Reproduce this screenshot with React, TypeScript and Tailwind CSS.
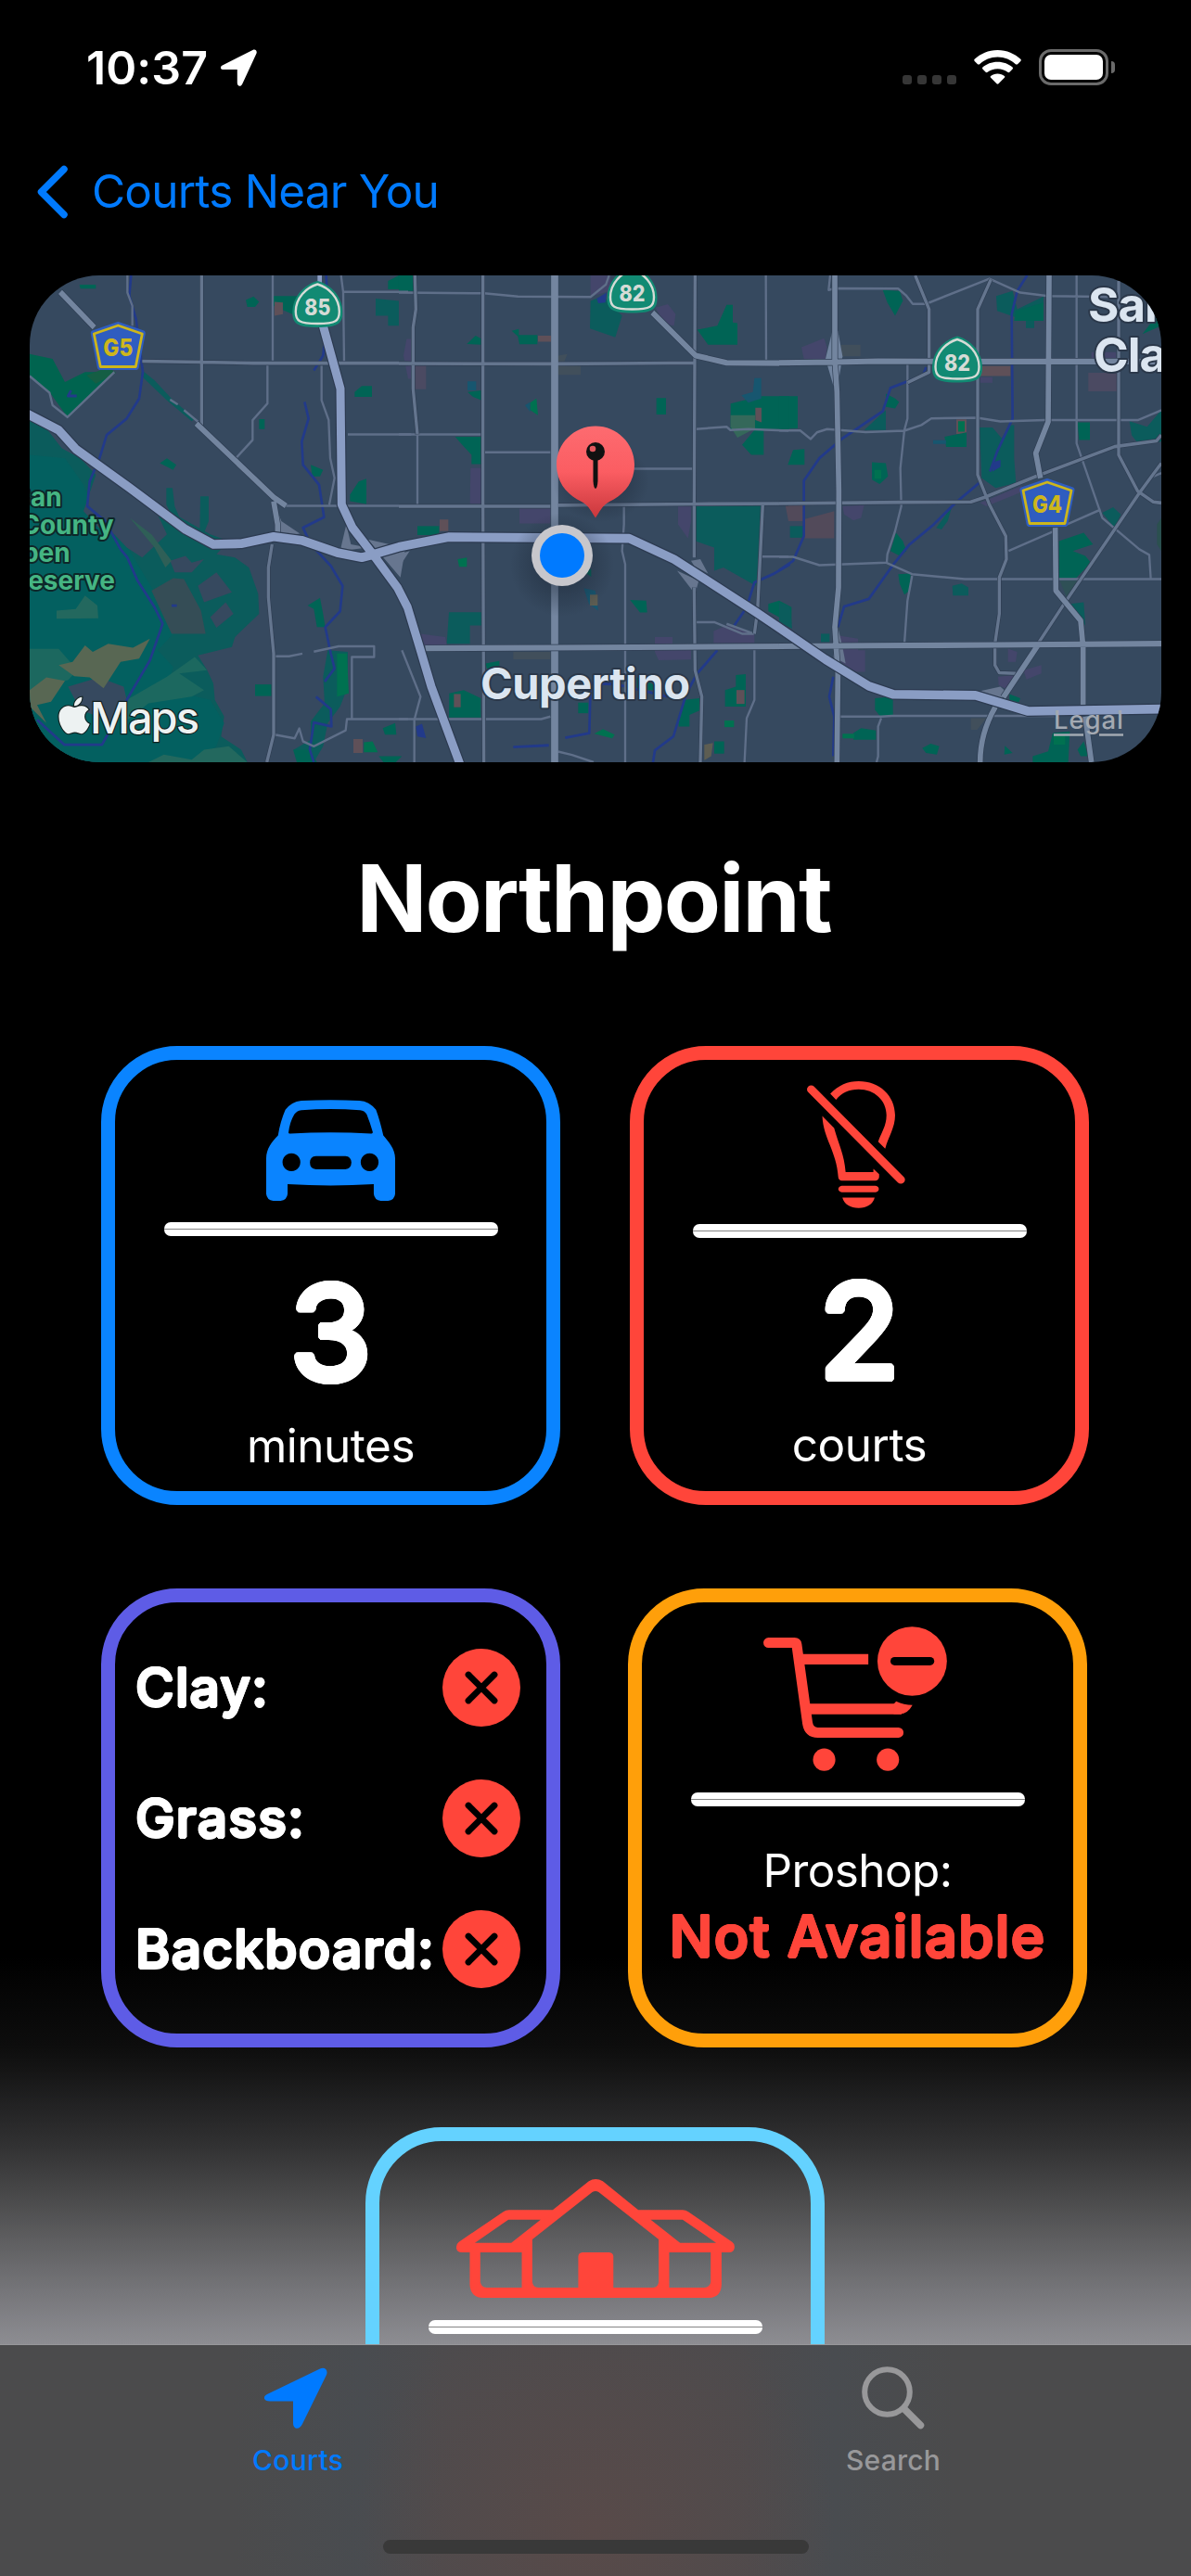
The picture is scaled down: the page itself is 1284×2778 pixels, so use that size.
import { FaApple } from "react-icons/fa";

const DILATE_LG =
  "[text-shadow:3px_0_#fff,-3px_0_#fff,0_3px_#fff,0_-3px_#fff,2.1px_2.1px_#fff,-2.1px_2.1px_#fff,2.1px_-2.1px_#fff,-2.1px_-2.1px_#fff,2.8px_1.1px_#fff,2.8px_-1.1px_#fff,-2.8px_1.1px_#fff,-2.8px_-1.1px_#fff,1.1px_2.8px_#fff,-1.1px_2.8px_#fff,1.1px_-2.8px_#fff,-1.1px_-2.8px_#fff]";
const DILATE_WHITE =
  "[text-shadow:1.5px_0_#fff,-1.5px_0_#fff,0_1.5px_#fff,0_-1.5px_#fff,1px_1px_#fff,-1px_1px_#fff,1px_-1px_#fff,-1px_-1px_#fff]";
const DILATE_RED =
  "[text-shadow:1.5px_0_#ff453a,-1.5px_0_#ff453a,0_1.5px_#ff453a,0_-1.5px_#ff453a,1px_1px_#ff453a,-1px_1px_#ff453a,1px_-1px_#ff453a,-1px_-1px_#ff453a]";

type Tile = { x: number; shapes: [string, string][]; rivers: string; minor: string; mid: string; major: string };

const TEAL = "#0b5c5c";
const DEEP = "#036060";
const PARK = "#006455";
const LAWN = "#007150";
const PURPLE = "#44466b";
const CLAY = "#5f5058";
const BLUE = "#17566f";
const SAND = "#586753";

const tiles: Tile[] = [
  {
    x: 0,
    shapes: [
      [TEAL, "M36 480L100 500L170 545L240 620L340 680L450 740L620 830L680 850L640 890L700 900L745 930L775 1010L778 1070L700 1140L690 1170L580 1195L610 1240L630 1280L635 1330L665 1380L655 1440L720 1480L740 1518H36Z"],
      [DEEP, "M36 590L150 600L210 680L240 750L310 820L360 880L430 990L480 1090L500 1130L450 1180L500 1230L480 1300L620 1330L665 1400L640 1470L560 1518H36Z"],
      [TEAL, "M400 335L440 365L500 425L570 480L560 488L480 425L395 350Z"],
      ["#36495f", "M90 510L150 530L230 610L340 690L450 770L480 830L400 900L350 870L310 830L260 810L210 760L250 650L200 600L140 570Z"],
      ["#36495f", "M490 910L540 895L560 915L600 905L560 945L505 945Z"],
      ["#36495f", "M580 985L640 945L690 1005L600 1035Z"],
      ["#36495f", "M620 1080L670 1035L695 1070L640 1112Z"],
      ["#36495f", "M160 1290L260 1262L340 1290L350 1330L310 1400L200 1360Z"],
      ["#354d56", "M430 1000L500 962L535 965L590 1060L605 1130L495 1130Z"],
      ["#00644f", "M36 285L110 300L150 370L215 340L310 340L160 478L100 400L36 350Z"],
      ["#155e44", "M220 350L290 325L315 342L250 375Z"],
      ["#2f5f57", "M360 780L430 830L495 910L475 930L440 870Z"],
      ["#23685e", "M123 1060L185 1055L215 1015L255 1045L258 1083L123 1085Z"],
      ["#1c685f", "M36 1176L130 1176L190 1240L160 1270L36 1300Z"],
      ["#1c685f", "M350 1330L480 1260L570 1200L610 1240L520 1250L600 1300L560 1320L420 1340L340 1400Z"],
      [SAND, "M130 1225L175 1215L215 1165L240 1185L290 1160L370 1172L425 1145L390 1205L330 1215L275 1295L230 1262L180 1258Z"],
      [SAND, "M36 1300L90 1262L150 1272L105 1335L60 1345L90 1400L36 1350Z"],
      ["#23685e", "M420 1518L470 1495L560 1510L600 1480L680 1470L740 1518Z"],
      [TEAL, "M478 690H498L505 745L530 800H510L478 740Z"],
      [TEAL, "M588 715H615V790L600 825H586Z"],
      [PARK, "M825 110H945V165H885L825 140Z"],
      [CLAY, "M828 128L855 130V165L828 170Z"],
      [PARK, "M735 122L760 112L778 128L765 143H740Z"],
      [TEAL, "M1155 118L1230 125V200H1195V170H1155Z"],
      [PARK, "M1195 65L1230 48H1260V90H1195Z"],
      [PARK, "M1087 400L1110 382H1143V415H1087Z"],
      [PARK, "M778 482H796V512H778Z"],
      [PARK, "M1072 710L1100 670L1125 662V738L1072 730Z"],
      [PARK, "M457 615L480 600L510 620L500 635Z"],
      [PARK, "M945 620L985 635L975 655H950Z"],
      [PARK, "M935 1045L975 1022L985 1070L992 1110H965L955 1055Z"],
      [TEAL, "M1000 1180L1065 1185V1290L1040 1350L1000 1400L985 1470L955 1518H915L890 1480L945 1450L945 1395L990 1340L985 1260Z"],
      [LAWN, "M1030 1190H1062L1068 1310L1030 1320Z"],
      [PARK, "M765 1283H818V1318H765Z"],
      [PARK, "M888 1480H940L965 1518H900Z"],
      [CLAY, "M1083 1448H1113V1490H1083Z"],
      [LAWN, "M1117 1458L1145 1455L1162 1488H1117Z"],
      [PARK, "M1178 1415L1218 1400L1222 1435H1185Z"],
      [PARK, "M1165 1500H1240L1220 1518H1180Z"],
      [PARK, "M197 76H250V88H200Z"],
      ["#67768f", "M830 740L850 790L910 828L830 838Z"],
      ["#67768f", "M1060 800L1075 860L1130 870L1040 880Z"],
      ["#67768f", "M1130 845L1200 860L1255 850L1235 960L1180 900Z"],
    ],
    rivers:
      "M364 48L358 110L380 180L402 340L390 420L350 480L285 530L262 600L230 670L222 745L280 790L330 875L352 900L385 970L440 1050L466 1100L425 1210L350 1330L270 1465H148L60 1390M995 48L1000 150L985 290L955 335M925 430L938 480L916 550L920 620L972 680L988 778L920 810L945 860L1010 925L1048 985L1040 1062L992 1110L1010 1190L1022 1235L990 1275M962 1320L1010 1358L1012 1410L955 1398L942 1480L955 1518M170 395L160 412H188M495 1045H512",
    minor:
      "M352 48V100L368 140V200M36 352L100 402L110 440L158 476L310 340M805 315V435L757 485V545L705 598M980 320V425L1003 485L1008 600L1022 660L1005 740M865 744H1250M1043 48L1050 98H1260M1050 98L1053 310M1065 528H1270M828 1198H875L918 1190M955 1184L1035 1168H1150V1200H1078V1388H1260M828 1435L893 1446L908 1416L920 1455L955 1470L1058 1422L1062 1388H1090M822 48V305M535 455L580 490M490 423L515 438",
    mid: "M592 48V500M400 307L590 310L760 313H1260M820 860L808 930V1020L825 1190V1435L803 1518",
    major: "M135 98L245 205M575 495L760 660L825 718L865 744M825 730L838 800V830",
  },
  {
    x: 1230,
    shapes: [
      [PARK, "M0 48H48V95H0Z"],
      [PURPLE, "M620 48H685V95L620 112Z"],
      [TEAL, "M620 125L660 110L722 170L700 235L618 208Z"],
      ["#223a8a", "M640 118L672 100L668 130L645 132Z"],
      [PURPLE, "M830 145L870 135L895 165L890 200L860 195Z"],
      [PARK, "M965 212L1030 200L1060 137H1080V190L1095 192V257H1000Z"],
      [PARK, "M220 255L248 230L268 240V257Z"],
      [PARK, "M365 215L388 210V228H448V256H390L385 232Z"],
      [CLAY, "M450 230H492V248H450Z"],
      ["#414f5b", "M515 290L545 285L530 320H588V348H515Z"],
      [PURPLE, "M15 290L25 240H40V360H30Z"],
      ["#4b4a62", "M50 320H88V392H50Z"],
      [BLUE, "M222 368H250V395H222Z"],
      [PARK, "M222 400L268 395V425L240 415Z"],
      [BLUE, "M408 440L425 430V460Z"],
      [LAWN, "M425 432L445 420L450 470L425 455Z"],
      [PARK, "M833 418H864V468H833Z"],
      [PARK, "M1073 435L1170 413H1290V510L1220 512H1180V590H1140L1110 560L1150 515H1073Z"],
      ["#35685a", "M1073 470H1152V510L1095 538L1073 505Z"],
      [BLUE, "M1108 410L1145 400L1150 358H1172V420L1130 432Z"],
      [CLAY, "M1153 448H1173V492L1153 485Z"],
      [PARK, "M182 535H268V618H235V590L205 560Z"],
      [PURPLE, "M232 630H268V738H230Z"],
      [PURPLE, "M390 750H490V797H390Z"],
      [PARK, "M60 805H130V832H60Z"],
      [CLAY, "M132 785H160V820H132Z"],
      [PURPLE, "M903 745H945V790L935 842L903 800Z"],
      [TEAL, "M960 742H1172L1165 900L1155 985L1050 930L1020 940L1020 870L960 850Z"],
      [LAWN, "M190 905L220 900V928H195Z"],
      [PARK, "M595 940L622 935V958Z"],
      [BLUE, "M598 992L635 1000L645 1060L615 1040Z"],
      ["#5d5d52", "M618 1012H643V1045H618Z"],
      [PARK, "M748 1028L800 1030L803 1066H780Z"],
      [TEAL, "M162 1065H268V1105H230V1160H155Z"],
      [PURPLE, "M70 1130L150 1140L155 1165H75Z"],
      [PURPLE, "M828 1140H885V1165L945 1178V1208L840 1210L828 1185Z"],
      [PURPLE, "M1018 1122L1060 1105L1150 1130V1158H1018Z"],
      [PARK, "M1195 1040L1230 1030L1270 1050V1100L1195 1062Z"],
      ["#414f5b", "M370 1185H490V1207H370Z"],
      [PARK, "M280 1220L325 1212V1235H285Z"],
      [PARK, "M163 1310L210 1300L265 1325V1383H162Z"],
      [CLAY, "M178 1312H200V1352H178Z"],
      ["#223a8a", "M55 1410L75 1402L88 1445L60 1440Z"],
      [PARK, "M580 1338H613V1370H580Z"],
      [LAWN, "M632 1432L660 1418L698 1435L690 1446Z"],
      [PARK, "M770 1262L800 1270L850 1300H770Z"],
      [PARK, "M905 1390L925 1330L972 1325V1362L940 1375V1410H905Z"],
      [PARK, "M1055 1350V1300L1090 1290V1255L1122 1252V1350Z"],
      [CLAY, "M1092 1300H1118V1342H1092Z"],
      [LAWN, "M1053 1392H1084V1412H1053Z"],
      ["#5d5d52", "M988 1465L1016 1460L1010 1500L988 1512Z"],
      [PARK, "M1020 1455H1052V1492H1020Z"],
      ["#67768f", "M945 910L975 905L1000 948L955 925Z"],
      ["#67768f", "M900 940L970 970L958 1010Z"],
      ["#67768f", "M0 890L35 880L0 930Z"],
    ],
    rivers:
      "M1265 920L1210 950L1150 975L1125 1050L1085 1105M1030 1180L965 1250L930 1310L888 1440L828 1482L822 1518M370 1472L485 1467M538 1444L616 1430L620 1280L700 1282L870 1320",
    minor:
      "M0 100L275 102L385 112L620 113L670 75L680 48M0 528H270M60 528V740M278 582H490M760 632H952M960 512L1060 505L1072 515L1130 512L1260 517M728 742V800L722 880L732 920V1518M960 1095H1020L1110 1130H1148M1060 1100L1148 1130M1170 897H1260M10 1180L70 1320L50 1390V1518M0 1388H460L490 1380M515 1486L560 1496L630 1518M1150 1180V1330L1125 1385L1118 1518M1187 48L1188 305",
    mid: "M52 48L55 150L46 205V390L60 528M272 48V740L275 1518M0 745H490M515 742L960 738L1260 737M958 48L955 740V900M955 990L958 1240L980 1320L975 1518M1177 740L1160 1060L1150 1130M0 314L500 315L700 314L960 312",
    major: "M820 160L960 290L1060 312L1265 313M85 1174L500 1172L900 1170L1265 1168",
  },
  {
    x: 2460,
    shapes: [
      [PARK, "M335 92L390 95L400 125L375 170L350 130Z"],
      [PURPLE, "M72 265L145 238L155 265L150 300H80Z"],
      ["#414f5b", "M200 257H263V292H200Z"],
      [TEAL, "M702 110L755 95L770 150L855 112V185H825V207H798V185L705 155Z"],
      [PARK, "M765 155L855 130V185H760Z"],
      [CLAY, "M650 322H748V352H650Z"],
      [PURPLE, "M650 355H690V372H650Z"],
      ["#4b4a62", "M1000 342H1092V398H1000Z"],
      [PURPLE, "M1010 280H1090V298H1010Z"],
      [PARK, "M1175 225L1236 150V200Z"],
      [PARK, "M0 413H33V512H0Z"],
      [PARK, "M345 405L375 420L388 430L375 450L345 445Z"],
      [TEAL, "M345 455V515H275L310 485Z"],
      [CLAY, "M573 483H606V527H573Z"],
      [PARK, "M535 535L606 522V566H540Z"],
      [LAWN, "M579 488H600V520H579Z"],
      [BLUE, "M498 546H540V557H498Z"],
      [TEAL, "M648 507H690L720 540L745 500H760V600L766 675L700 690L655 660Z"],
      ["#223a8a", "M690 612L716 605V626L690 640Z"],
      [PARK, "M965 492H1005V545H970Z"],
      [TEAL, "M1133 488L1190 505L1236 455V550L1160 555L1140 530Z"],
      [PARK, "M28 620L45 575L82 572V620Z"],
      [PARK, "M300 612L345 615L352 655L325 678L300 665Z"],
      [LAWN, "M308 635H330V662H308Z"],
      [PURPLE, "M650 735L785 683V702L670 745Z"],
      ["#524a5a", "M20 742H78V785L178 760V842H82V790H30Z"],
      [TEAL, "M35 805H78V840H35Z"],
      [PURPLE, "M205 745L275 742L265 780L240 788L210 770Z"],
      [TEAL, "M508 810L540 770L558 748L545 790L525 815Z"],
      [PARK, "M378 825L400 850L412 880L390 895L360 880Z"],
      [PARK, "M905 850L985 825L1015 860L950 880L990 895L1008 915L960 962H905Z"],
      ["#2f5056", "M908 970H970L930 1022Z"],
      [TEAL, "M940 1040L985 1035L990 1105L950 1055Z"],
      [TEAL, "M1045 765L1080 748L1105 770L1085 810Z"],
      [PARK, "M385 950L425 948L422 1000L405 1012L390 980Z"],
      [TEAL, "M560 985L590 978L612 990V1015H562Z"],
      [TEAL, "M0 1035L35 1048L42 1115L0 1095Z"],
      [PURPLE, "M190 1135L255 1145V1180H278V1245H240L200 1215Z"],
      [TEAL, "M135 1130H163V1155H135Z"],
      [PURPLE, "M740 1175L770 1185L765 1215H740Z"],
      [PURPLE, "M790 1240L848 1225V1250L800 1268Z"],
      [PURPLE, "M708 1260L760 1255L740 1300L710 1285Z"],
      [PARK, "M310 1325L368 1320V1375L330 1383L310 1360Z"],
      [PARK, "M240 1430L265 1415L313 1422V1450H240Z"],
      [LAWN, "M205 1432H243V1446H205Z"],
      [PARK, "M463 1475L490 1462L518 1470L510 1495L475 1490Z"],
      [PARK, "M730 1468L755 1490L728 1495Z"],
      [PARK, "M745 1312L780 1325L775 1337L745 1330Z"],
      [PARK, "M820 1500L870 1485L885 1430L940 1425L935 1518H820Z"],
      [LAWN, "M888 1435H925V1465H888Z"],
      [PARK, "M965 1480L985 1455L1000 1500H975Z"],
      ["#414f5b", "M620 1385H670L640 1420H620Z"],
      ["#2b504f", "M1222 800L1236 780V880L1222 860Z"],
      ["#67768f", "M650 1303L715 1290L740 1310L720 1325Z"],
      ["#67768f", "M190 1110L205 1170L215 1220L175 1200Z"],
      ["#71849f", "M172 215H190L205 292L190 380H175L150 300Z"],
    ],
    rivers:
      "M802 48L770 95L752 165L755 480L705 580L682 640M475 325L465 350L360 388L335 458L205 540L130 600L80 668L80 835L45 910L0 938M650 672L570 735L500 800L420 862L370 920L290 1025L210 1048L190 1110M175 1260L162 1320L178 1380L175 1500",
    minor:
      "M165 48L160 92L180 87L385 88L410 108L432 134H475L680 58L780 100L870 110L1100 113M415 316V480L405 515L392 630L395 745L375 820L350 890L348 915M0 516H68L102 542L122 522L155 512L280 521L405 517L460 500L492 480L640 478L715 489L860 485L1160 485L1236 455M0 898H45L130 923L345 915L430 950L600 965H1240M430 955L415 1030L405 1160M962 48V555L1045 780L1165 875L1197 892L1202 965M742 880L890 820M930 800L1040 755M198 1380H330L365 1378H890M330 1385L320 1410V1500L315 1518M1197 660L1236 645",
    mid: "M685 60L642 150V650L680 740L733 835L735 905L712 960V1070L698 1160V1225L712 1248L765 1250M440 48L485 150V340L415 372M0 737L400 733L620 732L665 718L830 655L1085 565L1220 548L1236 530M1098 65V590L1160 700L1210 732L1236 735M1236 615L1165 705L925 1035L830 1170",
    major:
      "M180 48V300L187 400L193 700L192 990L180 1110L190 1250L187 1518M0 312L180 310L320 307L640 308H1240M873 48L870 490L830 585L845 660M893 810L895 1000L975 1090L983 1170V1345M990 1380L1010 1518M0 1168L300 1166L700 1164L1240 1160M840 1160L725 1322M700 1350Q650 1430 650 1518",
  },
];

const HIGHWAYS =
  "M20 462L130 515L185 572L360 690L540 815L630 860L720 858L825 837L915 848L1030 885L1110 900L1150 890L1230 868L1390 838L1975 842L2120 905L2385 1065L2460 1112L2610 1208L2750 1288L2830 1313L3095 1316L3265 1364L3710 1357M985 200L1041 390L1045 740L1080 810L1150 895L1225 990L1258 1050L1300 1180L1335 1290L1430 1530";

function StateShield({ cx, top, label }: { cx: number; top: number; label: string }) {
  return (
    <g transform={`translate(${cx} ${top})`}>
      <path d="M0 0C-14 4 -27 16 -27 34C-27 46 -22 50 0 50C22 50 27 46 27 34C27 16 14 4 0 0Z" fill="#128a73" />
      <path d="M0 3.5C-12 7 -23.500 18 -23.500 33C-23.500 43 -20 46 0 46C20 46 23.500 43 23.500 33C23.500 18 12 7 0 3.500Z" fill="none" stroke="#d5dbd6" strokeWidth="2.4" />
      <text x="0" y="37" textAnchor="middle" fontSize="24" fontWeight="800" fill="#d5dbd6" textLength="28" lengthAdjust="spacingAndGlyphs">
        {label}
      </text>
    </g>
  );
}

function CountyShield({ cx, top, label }: { cx: number; top: number; label: string }) {
  return (
    <g transform={`translate(${cx} ${top})`}>
      <path d="M0 3L26 12L19 48H-19L-26 12Z" fill="#2f5dc0" stroke="#2f5dc0" strokeWidth="7" strokeLinejoin="round" />
      <path d="M0 3.500L26 12.500L19 48H-19L-26 12.500Z" fill="none" stroke="#cdb61b" strokeWidth="2.8" strokeLinejoin="round" />
      <text x="0" y="36" textAnchor="middle" fontSize="25.500" fontWeight="800" fill="#cdb61b" textLength="32" lengthAdjust="spacingAndGlyphs">
        {label}
      </text>
    </g>
  );
}

function MapCard() {
  return (
    <div className="mx-8 h-[525px] w-[1220px] shrink-0 overflow-hidden rounded-[75px] bg-[#36495f]">
      <svg viewBox="0 0 1220 525" className="block h-[525px] w-[1220px] font-[Inter,sans-serif]" fill="none">
        <defs>
          <linearGradient id="pin" x1="0" y1="0" x2="0" y2="1">
            <stop offset="0" stopColor="#fd6b70" />
            <stop offset=".5" stopColor="#fb5d62" />
            <stop offset="1" stopColor="#c9373c" />
          </linearGradient>
          <radialGradient id="halo">
            <stop offset=".3" stopColor="#1b2736" stopOpacity=".5" />
            <stop offset="1" stopColor="#1b2736" stopOpacity="0" />
          </radialGradient>
        </defs>
        <g transform="scale(.333333 .357143) translate(-36 -48)" strokeLinejoin="round">
          {tiles.map((t) => (
            <g key={t.x} transform={`translate(${t.x} 0)`}>
              {t.shapes.map(([c, d], i) => (
                <path key={i} d={d} fill={c} />
              ))}
              <path d={t.rivers} stroke="#223a8a" strokeWidth="8" />
            </g>
          ))}
          {tiles.map((t) => (
            <g key={t.x} transform={`translate(${t.x} 0)`}>
              <path d={t.minor} stroke="#5f6f89" strokeWidth="7" />
              <path d={t.mid} stroke="#2f3e53" strokeWidth="14" />
              <path d={t.mid} stroke="#64758e" strokeWidth="10" />
            </g>
          ))}
          <path d="M1734 48V1518" stroke="#73859f" strokeWidth="23" />
          {tiles.map((t) => (
            <g key={t.x} transform={`translate(${t.x} 0)`}>
              <path d={t.major} stroke="#2f3e53" strokeWidth="21" />
              <path d={t.major} stroke="#73859f" strokeWidth="17" />
            </g>
          ))}
          <path d={HIGHWAYS} stroke="#2c3a50" strokeWidth="34" />
          <path d={HIGHWAYS} stroke="#8a9dc4" strokeWidth="27" />
          <path d="M974 40V90" stroke="#8a9dc4" strokeWidth="14" />
        </g>

        <StateShield cx={310.3} top={6} label="85" />
        <StateShield cx={649.5} top={-9.5} label="82" />
        <StateShield cx={1000} top={65.5} label="82" />
        <CountyShield cx={95.3} top={50.5} label="G5" />
        <CountyShield cx={1097} top={219.5} label="G4" />

        <g fill="#45b583" stroke="#0d2729" strokeWidth="4" paintOrder="stroke" strokeLinejoin="round" fontSize="28" fontWeight="700" textAnchor="end">
          <text x="34.700" y="249">San</text>
          <text x="90.700" y="278.600">County</text>
          <text x="43.700" y="309">Open</text>
          <text x="92" y="339">Preserve</text>
        </g>
        <g fill="#dbe5f0" stroke="#2b384a" strokeWidth="4" paintOrder="stroke" strokeLinejoin="round" fontWeight="700">
          <text x="486" y="457" fontSize="47" textLength="226">Cupertino</text>
          <text x="1141" y="50" fontSize="51" letterSpacing="-1">Santa</text>
          <text x="1147" y="103.600" fontSize="51" letterSpacing="-1">Clara</text>
        </g>

        <g fill="#edf2f2" stroke="#12201f" strokeWidth="2.500" paintOrder="stroke">
          <FaApple x={25.5} y={452} size={45} color="#edf2f2" stroke="#12201f" strokeWidth={26} style={{ paintOrder: "stroke", overflow: "visible", color: "#edf2f2" }} />
          <text x="65" y="494" fontSize="47" fontWeight="500" textLength="118">Maps</text>
        </g>
        <text x="1104" y="489.300" fontSize="27.500" fontWeight="500" fill="#a3a9b2" textLength="75">Legal</text>
        <path d="M1104 495.500H1136M1153 495.500H1179" stroke="#a3a9b2" strokeWidth="2.500" />

        <circle cx="574" cy="312" r="56" fill="url(#halo)" />
        <ellipse cx="616" cy="222" rx="52" ry="44" fill="url(#halo)" />
        <circle cx="574" cy="302" r="33" fill="#c7c7cc" />
        <circle cx="574" cy="302" r="24" fill="#007aff" />
        <path d="M610 162.500C633 162.500 652 181 652 204C652 224 640 237 625 244C617 248 614 256 610 261.500C606 256 603 248 595 244C580 237 568 224 568 204C568 181 587 162.500 610 162.500Z" fill="url(#pin)" />
        <path d="M607.500 196H612.500V222Q612 229 610 230Q608 229 607.500 222Z" fill="#111" />
        <circle cx="610" cy="190" r="10" fill="#111" />
        <circle cx="607" cy="187" r="3.300" fill="#e2585e" />
      </svg>
    </div>
  );
}

function Divider({ className }: { className: string }) {
  return (
    <div className={`flex h-[15px] w-[360px] shrink-0 items-center rounded-[7px] bg-white ${className}`}>
      <div className="h-px w-full bg-[#858585]" />
    </div>
  );
}

function Car() {
  return (
    <svg viewBox="572 225 404 323" preserveAspectRatio="none" className="mt-[43px] h-[109px] w-[139px] shrink-0" fill="#0a84ff">
      <path
        fillRule="evenodd"
        d="M682 228Q774 223 864 228Q895 230 916 257Q928 290 939 339C955 358 976 382 976 412V526Q974 546 954 548H931Q911 546 909 526V495Q774 503 639 495V526Q637 546 617 548H594Q574 546 572 526V412C572 382 590 358 609 339Q616 295 632 257Q650 232 682 228ZM682 258Q774 252 866 258Q880 259 887 272Q898 300 906 329Q906 334 900 333Q774 326 648 333Q641 334 642 329Q646 296 660 272Q667 260 682 258ZM651 396A28 28.500 0 1 0 651.100 396ZM896 396A28 28.500 0 1 0 896.100 396ZM728 405Q709 406 709 426Q709 446 728 447H820Q838 446 839 426Q838 406 820 405Z"
      />
    </svg>
  );
}

function BulbOff() {
  return (
    <svg viewBox="611 167 308 405" preserveAspectRatio="none" className="mt-[23px] mr-[7px] h-[137px] w-[106px] shrink-0" fill="#ff453a">
      <path d="M624 193L905 481" stroke="#ff453a" strokeWidth="26" strokeLinecap="round" />
      <path d="M684 207C710 180 738 167 773 167C838 167 887 213 887 276C887 315 866 345 856 382L834 360C843 333 860 310 860 276C860 228 822 193 773 193C743 193 720 204 702 226Z" />
      <path d="M659 278L696 316C710 368 728 400 732 457H819V446L837 463V472Q836 483 825 484H720Q710 483 709 473C704 390 662 350 659 278Z" />
      <path d="M720 500H826Q836 502 836 511Q836 520 826 521H720Q710 520 709 511Q710 502 720 500ZM722 538H823C818 559 798 571 773 571C747 571 727 559 722 538Z" />
    </svg>
  );
}

function CartMinus() {
  return (
    <svg viewBox="473 186 574 454" preserveAspectRatio="none" className="mt-[26px] mr-[5px] h-[156px] w-[198px] shrink-0" fill="none">
      <path d="M489 237H570Q576 237 577 243L611 490Q616 519 643 519H895" stroke="#ff453a" strokeWidth="32" strokeLinecap="round" strokeLinejoin="round" />
      <path d="M590 289H801M615 445H905" stroke="#ff453a" strokeWidth="33" />
      <path d="M880 430L888 421Q912 433 939 433Q924 461 900 461H880Z" fill="#ff453a" />
      <circle cx="663" cy="604" r="35" fill="#ff453a" />
      <circle cx="862" cy="604" r="35" fill="#ff453a" />
      <circle cx="938" cy="295" r="108.500" fill="#ff453a" />
      <path d="M883 295H994" stroke="#000" strokeWidth="26" strokeLinecap="round" />
    </svg>
  );
}

function Clubhouse() {
  return (
    <svg viewBox="353 240 872 384" preserveAspectRatio="none" className="mt-[41px] h-[128px] w-[300px] shrink-0" fill="#ff453a">
      <path
        fillRule="evenodd"
        d="M655 340L768 247Q789 233 812 247L923 340H1062Q1072 340 1080 346L1217 443Q1227 450 1224 464Q1221 477 1208 477H1184V582Q1182 622 1146 624H434Q398 622 395 582V477H370Q356 477 353 464Q352 450 361 443L500 346Q508 340 518 340ZM516 371L411 446H525L617 371ZM1062 371L1167 446H1054L962 371ZM428 477V572Q430 589 448 591H558V477ZM1150 477V572Q1148 589 1130 591H1020V477ZM779 282L591 435V572Q592 589 610 591H735V490Q736 478 748 477H832Q844 478 845 490V591H969Q986 589 987 572V435L799 282Q789 276 779 282Z"
      />
    </svg>
  );
}

function SurfaceRow({ label }: { label: string }) {
  return (
    <div className="flex h-[84px] items-center justify-between">
      <span className={`mb-[2px] text-[57px] leading-none font-medium tracking-[1.2px] whitespace-nowrap ${DILATE_WHITE}`}>{label}</span>
      <svg viewBox="0 0 84 84" className="h-[84px] w-[84px] shrink-0">
        <circle cx="42" cy="42" r="42" fill="#ff453a" />
        <path d="M28 28L56 56M56 28L28 56" stroke="#000" strokeWidth="6.800" strokeLinecap="round" />
      </svg>
    </div>
  );
}

function LocationArrow({ className }: { className: string }) {
  return (
    <svg viewBox="0 0 68 66" preserveAspectRatio="none" className={className} fill="currentColor">
      <path d="M3 29L60 1.500C65 -1 69 3 67 8L41 61C38 68 31 67 31 60V36.500H6C-1 36.500 -2 31.500 3 29Z" />
    </svg>
  );
}

const CARD = "flex h-[495px] w-[495px] shrink-0 flex-col rounded-[82px] border-[15px]";

export default function App() {
  return (
    <div className="flex h-[2778px] w-[1284px] flex-col overflow-hidden bg-black font-[Inter,sans-serif] text-white">
      <div className="flex h-[2528px] shrink-0 flex-col overflow-hidden bg-[linear-gradient(to_bottom,#000_2110px,#0d0d0d_2206px,#141414_2230px,#222223_2270px,#303031_2310px,#4a4a4b_2370px,#606062_2420px,#757579_2470px,#8d8d92_2528px)]">
        <header className="flex h-[150px] shrink-0 items-start justify-between pt-[48px] pr-[82px] pl-[93px]">
          <div className="flex items-start">
            <span className="w-[145px] text-[50px] leading-none font-semibold tracking-[0.1px]">10:37</span>
            <LocationArrow className="mt-[5px] h-[40px] w-[39px]" />
          </div>
          <div className="flex items-start pt-[5px]">
            <div className="mt-[28px] flex gap-[6px]">
              <i className="h-[10px] w-[10px] rounded-[3px] bg-[#363636]" />
              <i className="h-[10px] w-[10px] rounded-[3px] bg-[#363636]" />
              <i className="h-[10px] w-[10px] rounded-[3px] bg-[#363636]" />
              <i className="h-[10px] w-[10px] rounded-[3px] bg-[#363636]" />
            </div>
            <svg viewBox="0 0 51 37" className="mt-px ml-[19px] h-[37px] w-[51px]" fill="#fff">
              <path d="M25.500 0C35.500 0 44 4 50.300 9.700Q51.300 10.800 50.300 11.900L47 15.200Q46 16 44.900 15.200C39.800 10.500 33 7.600 25.500 7.600C18 7.600 11.200 10.500 6.100 15.200Q5 16 4 15.200L.7 11.900Q-.3 10.800 .7 9.700C7 4 15.500 0 25.500 0Z" />
              <path d="M25.500 12.700C32 12.700 37.500 15 41.600 18.600Q42.500 19.500 41.600 20.500L38.400 23.800Q37.400 24.600 36.300 23.800C33.300 21.500 29.700 20.200 25.500 20.200C21.300 20.200 17.700 21.500 14.700 23.800Q13.600 24.600 12.600 23.800L9.400 20.500Q8.500 19.500 9.400 18.600C13.500 15 19 12.700 25.500 12.700Z" />
              <path d="M25.500 25.500C28.500 25.500 30.900 26.400 32.900 27.900Q33.900 28.800 32.900 29.800L26.500 36.200Q25.500 37.100 24.500 36.200L18.100 29.800Q17.100 28.800 18.100 27.900C20.100 26.400 22.500 25.500 25.500 25.500Z" />
            </svg>
            <div className="ml-[19px] flex h-[39px] w-[75px] items-center rounded-[13px] border-[3px] border-[#6a6a6a] p-[3px]">
              <div className="h-full w-full rounded-[7px] bg-white" />
            </div>
            <div className="mt-[13px] ml-[3px] h-[13px] w-[4px] rounded-r-full bg-[#6a6a6a]" />
          </div>
        </header>

        <nav className="flex h-[147px] shrink-0 items-start pt-[28px] pl-[39px] text-[#007aff]">
          <svg viewBox="0 0 35 58" className="h-[58px] w-[35px]" fill="none">
            <path d="M30 4.500L5.500 29L30 53.500" stroke="currentColor" strokeWidth="7.500" strokeLinecap="round" strokeLinejoin="round" />
          </svg>
          <span className="mt-[4px] ml-[25px] text-[49.5px] leading-none tracking-[-0.8px]">Courts Near You</span>
        </nav>

        <MapCard />

        <h1 className="mt-[97px] shrink-0 pr-[4px] text-center text-[100px] leading-none font-bold tracking-[-1.8px]">Northpoint</h1>

        <div className="mt-[109px] ml-[109px] flex shrink-0 gap-[75px]">
          <section className={`${CARD} items-center border-[#0a84ff]`}>
            <Car />
            <Divider className="mt-[23px]" />
            <div className={`mt-[33px] text-[142px] leading-none font-medium ${DILATE_LG}`}>3</div>
            <div className="mt-[27px] text-[49.5px] leading-none tracking-[-0.5px]">minutes</div>
          </section>
          <section className={`${CARD} items-center border-[#ff453a]`}>
            <BulbOff />
            <Divider className="mt-[17px]" />
            <div className={`mt-[29px] text-[142px] leading-none font-medium ${DILATE_LG}`}>2</div>
            <div className="mt-[28px] text-[49.5px] leading-none tracking-[-0.5px]">courts</div>
          </section>
        </div>

        <div className="mt-[90px] ml-[109px] flex shrink-0 gap-[73px]">
          <section className={`${CARD} gap-[57px] border-[#5e5ce6] pt-[50px] pr-[28px] pl-[22px]`}>
            <SurfaceRow label="Clay:" />
            <SurfaceRow label="Grass:" />
            <SurfaceRow label="Backboard:" />
          </section>
          <section className={`${CARD} items-center border-[#ff9f0a]`}>
            <CartMinus />
            <Divider className="mt-[23px]" />
            <div className="mt-[45px] text-[49.5px] leading-none tracking-[-0.6px]">Proshop:</div>
            <div className={`mt-[14px] text-[62px] leading-none font-medium tracking-[1.3px] whitespace-nowrap text-[#ff453a] ${DILATE_RED}`}>Not Available</div>
          </section>
        </div>

        <section className={`${CARD} mt-[86px] ml-[394px] items-center border-[#64d2ff]`}>
          <Clubhouse />
          <Divider className="mt-[24px]" />
        </section>
      </div>

      <footer className="flex h-[250px] shrink-0 flex-col items-center border-t border-[#97979a] bg-[radial-gradient(ellipse_260px_260px_at_640px_200px,#584a49,#584a4900),linear-gradient(to_right,#4b4b4c_250px,#494c50_390px,#4d4b4d_480px,#4d4b4d_800px,#494c50_900px,#4b4b4c_1030px)]">
        <div className="flex h-[210px] w-full">
          <div className="flex w-1/2 flex-col items-center pt-[24px] text-[#007aff]">
            <LocationArrow className="mr-[5px] h-[66px] w-[68px]" />
            <span className="mt-[19px] text-[30px] leading-none font-medium tracking-[0.3px]">Courts</span>
          </div>
          <div className="flex w-1/2 flex-col items-center pt-[23px] text-[#98989a]">
            <svg viewBox="0 0 68 68" className="h-[68px] w-[68px]" fill="none" stroke="currentColor">
              <circle cx="27.500" cy="27.500" r="24.300" strokeWidth="6" />
              <path d="M46 46L63.500 63.500" strokeWidth="7.500" strokeLinecap="round" />
            </svg>
            <span className="mt-[18px] text-[30px] leading-none font-medium tracking-[0.2px]">Search</span>
          </div>
        </div>
        <div className="h-[15px] w-[459px] rounded-full bg-[#393939]" />
      </footer>
    </div>
  );
}
